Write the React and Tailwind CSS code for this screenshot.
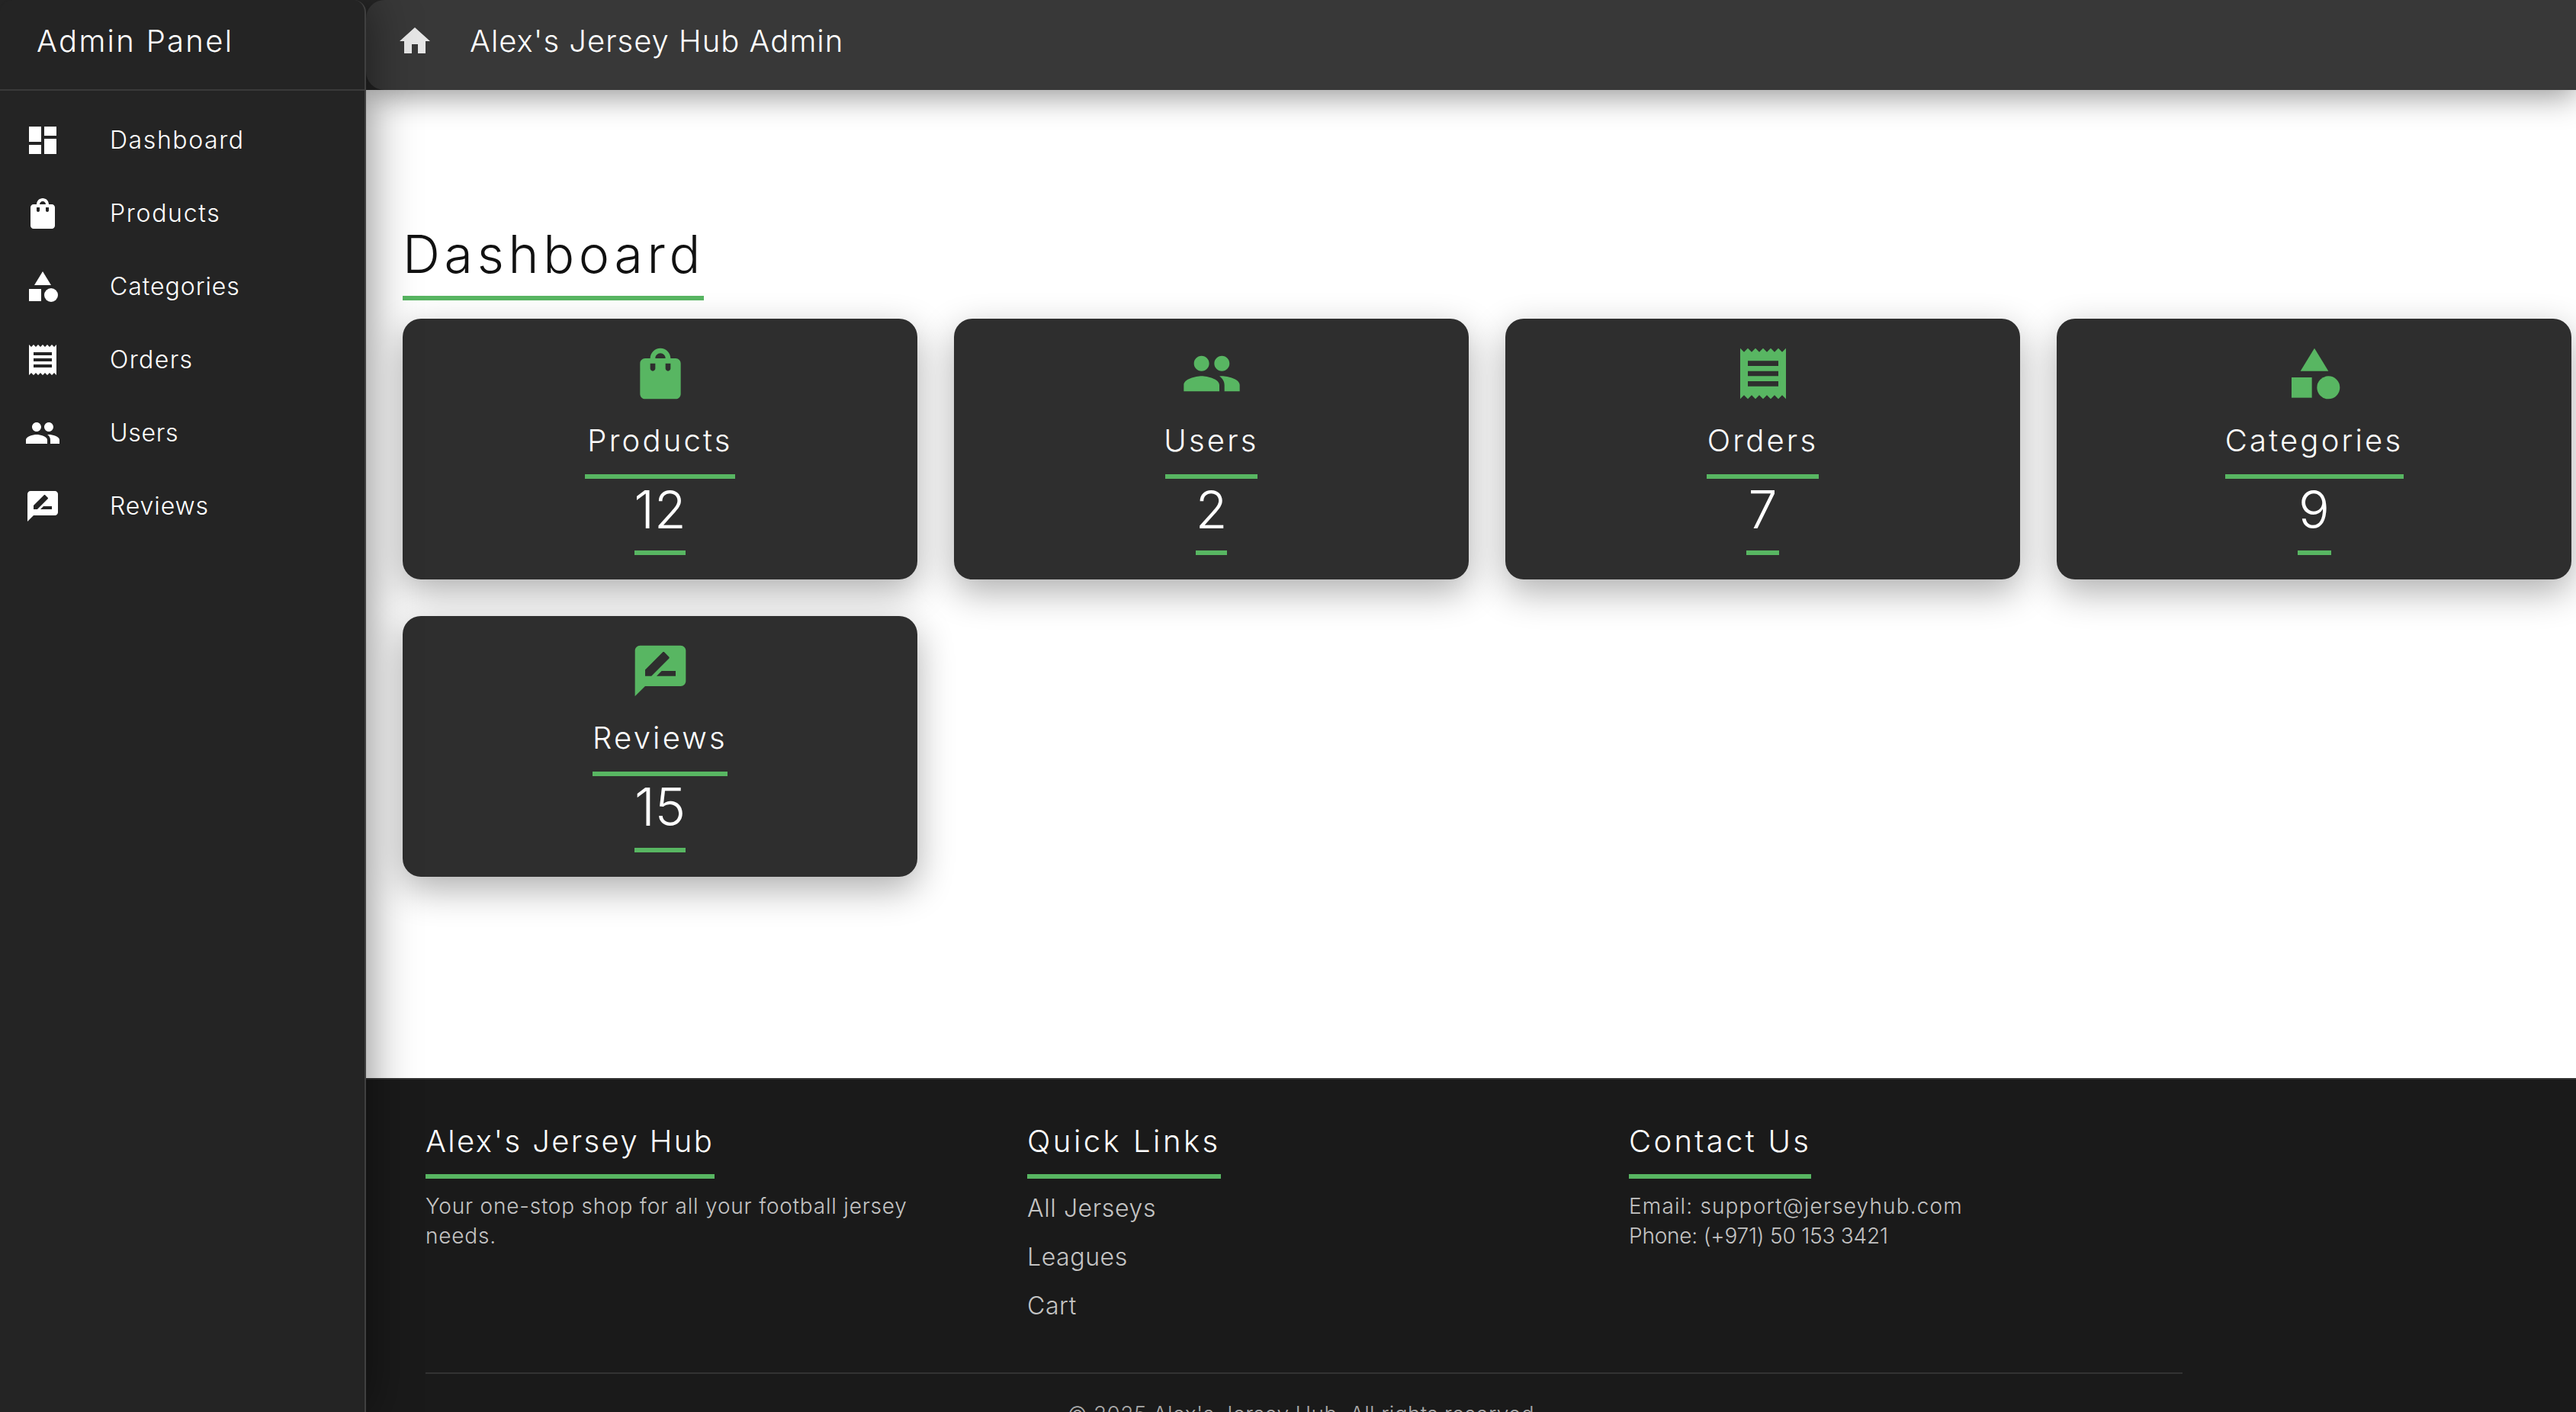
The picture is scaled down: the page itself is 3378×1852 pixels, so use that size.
import React from 'react';

const paths = {
  dashboard: <path d="M3 13h8V3H3v10zm0 8h8v-6H3v6zm10 0h8V11h-8v10zm0-18v6h8V3h-8z" />,
  bag: <path d="M18 6h-2c0-2.21-1.79-4-4-4S8 3.79 8 6H6c-1.1 0-2 .9-2 2v12c0 1.1.9 2 2 2h12c1.1 0 2-.9 2-2V8c0-1.1-.9-2-2-2zm-8 4c0 .55-.45 1-1 1s-1-.45-1-1V8h2v2zm2-6c1.1 0 2 .9 2 2h-4c0-1.1.9-2 2-2zm4 6c0 .55-.45 1-1 1s-1-.45-1-1V8h2v2z" />,
  category: (
    <>
      <path d="M12 2l-5.5 9h11z" />
      <circle cx="17.5" cy="17.5" r="4.5" />
      <path d="M3 13.5h8v8H3z" />
    </>
  ),
  receipt: <path d="M18 17H6v-2h12v2zm0-4H6v-2h12v2zm0-4H6V7h12v2zM3 22l1.5-1.5L6 22l1.5-1.5L9 22l1.5-1.5L12 22l1.5-1.5L15 22l1.5-1.5L18 22l1.5-1.5L21 22V2l-1.5 1.5L18 2l-1.5 1.5L15 2l-1.5 1.5L12 2l-1.5 1.5L9 2 7.5 3.5 6 2 4.5 3.5 3 2v20z" />,
  people: <path d="M16 11c1.66 0 2.99-1.34 2.99-3S17.66 5 16 5c-1.66 0-3 1.34-3 3s1.34 3 3 3zm-8 0c1.66 0 2.99-1.34 2.99-3S9.66 5 8 5C6.34 5 5 6.34 5 8s1.34 3 3 3zm0 2c-2.33 0-7 1.17-7 3.5V19h14v-2.5c0-2.33-4.67-3.5-7-3.5zm8 0c-.29 0-.62.02-.97.05 1.16.84 1.97 1.97 1.97 3.45V19h6v-2.5c0-2.33-4.67-3.5-7-3.5z" />,
  review: <path d="M20 2H4c-1.1 0-1.99.9-1.99 2L2 22l4-4h14c1.1 0 2-.9 2-2V4c0-1.1-.9-2-2-2zM6 14v-2.47l6.88-6.88c.2-.2.51-.2.71 0l1.77 1.77c.2.2.2.51 0 .71L8.47 14H6zm12 0h-7.5l2-2H18v2z" />,
  home: <path d="M10 20v-6h4v6h5v-8h3L12 3 2 12h3v8z" />,
};

function Icon({ name, className }) {
  return (
    <svg viewBox="0 0 24 24" fill="currentColor" className={className}>
      {paths[name]}
    </svg>
  );
}

// tracking is per item: the font here is narrower than the one in the design
const navItems = [
  { label: 'Dashboard', icon: 'dashboard', tracking: 'tracking-[1.6px]' },
  { label: 'Products', icon: 'bag', tracking: 'tracking-[1.7px]' },
  { label: 'Categories', icon: 'category', tracking: 'tracking-[0.95px]' },
  { label: 'Orders', icon: 'receipt', tracking: 'tracking-[1.4px]' },
  { label: 'Users', icon: 'people', tracking: 'tracking-[0.7px]' },
  { label: 'Reviews', icon: 'review', tracking: 'tracking-[0.9px]' },
];

const stats = [
  { label: 'Products', value: 12, icon: 'bag', labelW: 'w-[197px]', valueW: 'w-[67px]' },
  { label: 'Users', value: 2, icon: 'people', labelW: 'w-[121px]', valueW: 'w-[41px]' },
  { label: 'Orders', value: 7, icon: 'receipt', labelW: 'w-[147px]', valueW: 'w-[43px]' },
  { label: 'Categories', value: 9, icon: 'category', labelW: 'w-[234px]', valueW: 'w-[44px]' },
  { label: 'Reviews', value: 15, icon: 'review', labelW: 'w-[177px]', valueW: 'w-[67px]' },
];

function StatCard({ stat }) {
  return (
    <div className="h-[342px] rounded-[24px] bg-[#2e2e2e] pt-8 flex flex-col items-center text-white shadow-[0_16px_48px_rgba(0,0,0,0.32)]">
      <Icon name={stat.icon} className="w-20 h-20 text-[#58b662]" />
      <div className={`${stat.labelW} mt-5 h-[78px] border-b-[6px] border-[#58b662] text-[40px] leading-[56px] tracking-[3.2px] font-light whitespace-nowrap flex justify-center`}>
        {stat.label}
      </div>
      <div className={`${stat.valueW} h-[100px] border-b-[6px] border-[#58b662] text-[68px] leading-[80px] font-light flex justify-center`}>
        {stat.value}
      </div>
    </div>
  );
}

function FooterHeading({ children, className }) {
  return (
    <h3 className={`${className} h-[76px] border-b-[6px] border-[#58b662] text-[40px] leading-[54px] font-light text-white whitespace-nowrap`}>
      {children}
    </h3>
  );
}

export default function App() {
  return (
    <div className="flex h-[1852px] w-[3378px] overflow-hidden bg-[#2a2a2a] font-['Inter','Liberation_Sans',sans-serif]">
      <aside className="relative z-20 w-[480px] shrink-0 rounded-t-2xl border-r-2 border-[#404040] bg-[#242424] text-white shadow-[0_0_64px_rgba(0,0,0,0.5)]">
        <div className="h-[119px] border-b-2 border-[#3a3a3a] pl-12 flex items-center pb-[10px]">
          <span className="text-[40px] font-light tracking-[2.3px]">Admin Panel</span>
        </div>
        <nav className="pt-[17px]">
          {navItems.map((item) => (
            <div key={item.label} className="h-24 pl-8 flex items-center">
              <Icon name={item.icon} className="w-12 h-12 shrink-0" />
              <span className={`ml-16 text-[32px] font-light ${item.tracking}`}>{item.label}</span>
            </div>
          ))}
        </nav>
      </aside>

      <div className="flex-1 min-w-0 flex flex-col">
        <header className="relative z-10 h-[118px] shrink-0 rounded-l-[24px] bg-[#383838] pl-10 pb-[10px] flex items-center text-white shadow-[0_8px_40px_rgba(0,0,0,0.42)]">
          <Icon name="home" className="w-12 h-12 text-[#e6e6e6]" />
          <span className="ml-12 text-[40px] font-light tracking-[1px]">Alex's Jersey Hub Admin</span>
        </header>

        <main className="h-[1296px] shrink-0 bg-white pl-12 pt-[176px]">
          <h1 className="w-[395px] h-[100px] border-b-[6px] border-[#58b662] text-[68px] leading-[78px] font-light tracking-[5.7px] text-[#111] whitespace-nowrap">
            Dashboard
          </h1>
          <div className="mt-6 grid grid-cols-[repeat(4,675px)] gap-12">
            {stats.map((stat) => (
              <StatCard key={stat.label} stat={stat} />
            ))}
          </div>
        </main>

        <footer className="relative z-10 flex-1 border-t-2 border-[#333] bg-[#1a1a1a] pl-[78px] pt-[54px] w-full">
          <div className="w-[2304px]">
            <div className="h-[330px] grid grid-cols-[repeat(3,726px)] gap-x-[63px]">
              <div>
                <FooterHeading className="w-[379px] tracking-[2.4px]">Alex's Jersey Hub</FooterHeading>
                <p className="mt-[17px] text-[28px] leading-[39px] font-light text-[#c4c4c4] tracking-[0.8px]">
                  Your one-stop shop for all your football jersey<br />needs.
                </p>
              </div>
              <div>
                <FooterHeading className="w-[254px] tracking-[3.5px]">Quick Links</FooterHeading>
                <ul className="mt-[18px] text-[32px] font-light text-[#c4c4c4] tracking-[0.6px]">
                  <li className="h-16 leading-[42px]">All Jerseys</li>
                  <li className="h-16 leading-[42px]">Leagues</li>
                  <li className="h-16 leading-[42px]">Cart</li>
                </ul>
              </div>
              <div>
                <FooterHeading className="w-[239px] tracking-[3.3px]">Contact Us</FooterHeading>
                <p className="mt-[17px] text-[28px] leading-[39px] font-light text-[#c4c4c4]">
                  <span className="block tracking-[1.15px]">Email: support@jerseyhub.com</span>
                  <span className="block tracking-[-0.2px]">Phone: (+971) 50 153 3421</span>
                </p>
              </div>
            </div>
            <div className="border-t-2 border-[#333] pt-[33px] text-center text-[28px] leading-[40px] font-light text-[#aaa] tracking-[0.33px]">
              © 2025 Alex's Jersey Hub. All rights reserved.
            </div>
          </div>
        </footer>
      </div>
    </div>
  );
}
